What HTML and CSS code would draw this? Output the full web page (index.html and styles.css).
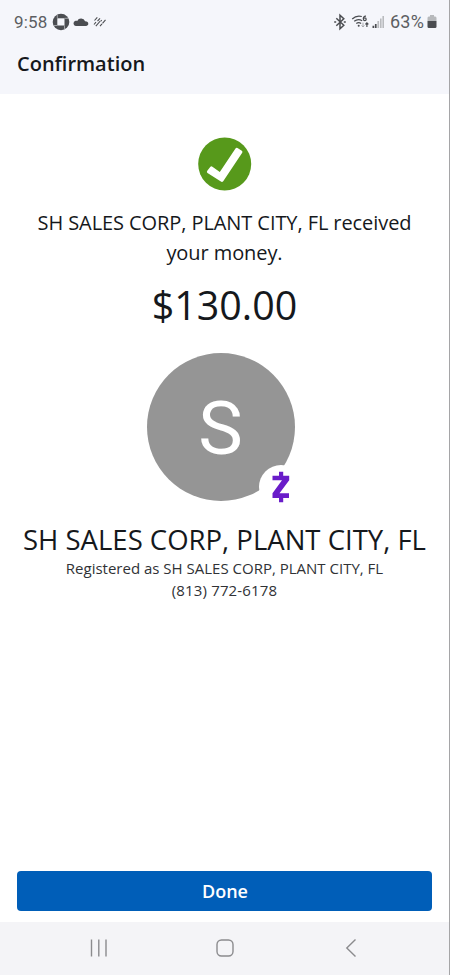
FILE: index.html
```html
<!DOCTYPE html>
<html lang="en">
<head>
<meta charset="utf-8">
<title>Confirmation</title>
<link rel="stylesheet" href="styles.css">
</head>
<body>
<div class="screen">
  <header class="top">
    <div class="status">
      <span class="time">9:58</span>
      <svg class="left-icons" width="56" height="18" viewBox="0 0 56 18">
        <circle cx="9" cy="9" r="8.3" fill="#4b4d51"/>
        <path d="M5.300 5.300h7.200v7.200H5.300z" fill="#f5f6fb"/>
        <path d="M5.300 5.300V1.400M12.500 5.300h4.200M12.500 12.500v4.200M5.300 12.500H1.400" stroke="#b5b7bb" stroke-width=".8"/>
        <path d="M23.700 12.900a2.600 2.600 0 0 1-.2-5.100c.8-.2 1.300-.1 1.700.1a4.300 4.300 0 0 1 7.900.4c2.300 0 3.200 1.300 3.200 2.500 0 1.300-1 2.100-2.300 2.100z" fill="#4b4d51"/>
        <path d="M42.500 7.500l2.800-3.200M42 11.500l2-2.300M45.500 8.200l2.500-2.900M43.800 13.200l4.500-5.200M48 13.200l2-2.300M50.500 10.300l3-3.500M48.800 8.200l.9-1" fill="none" stroke="#4b4d51" stroke-width="1.100"/>
      </svg>
      <svg class="right-icons" width="54" height="18" viewBox="0 0 54 18">
        <path d="M2.300 5.300l7.500 7-3.800 3.400V2.300L9.800 5.700l-7.500 7" fill="none" stroke="#4b4d51" stroke-width="1.500"/>
        <path d="M.2 9h2M9.800 9h2" stroke="#4b4d51" stroke-width="1.700"/>
        <g fill="none" stroke="#4b4d51" stroke-width="1.200">
          <path d="M18.200 6a10 10 0 0 1 9.600-2.500M20.200 8.300a7 7 0 0 1 8-.5M22.300 10.600a4 4 0 0 1 4.800 0"/>
          <path d="M32 3.200c-2-.2-2.700 1.200-2.700 2.800M32.900 14V9.800M31.400 11.300l1.500-1.500 1.500 1.500"/>
          <circle cx="30.800" cy="6.300" r="1.400"/>
        </g>
        <circle cx="24.700" cy="12.700" r="1" fill="#4b4d51"/>
        <path d="M29 9.600v4.400M27.600 12.400l1.400 1.600 1.400-1.600" fill="none" stroke="#a7a9ad"/>
        <path d="M38.500 12.800h1.700V15h-1.700z M40.900 11h1.700v4h-1.700z" fill="#4b4d51"/>
        <path d="M43.400 8h1.700v7h-1.700z M46 5.500h1.600V15H46z M48.400 3H50v12h-1.600z" fill="#b9bbbe"/>
      </svg>
      <span class="percent">63%</span>
      <svg class="battery" width="10" height="14" viewBox="0 0 10 14">
        <path d="M3 0h4v1.500h1.200Q9.500 1.500 9.500 3v3H.5V3Q.5 1.500 1.800 1.500H3z" fill="#b7b9bc"/>
        <path d="M.5 6h9v5.700q0 1.400-1.400 1.400H1.900Q.5 13.100.5 11.700z" fill="#4b4d51"/>
      </svg>
    </div>
    <h1 class="title">Confirmation</h1>
  </header>
  <main class="content">
    <svg class="check" width="54" height="54" viewBox="0 0 54 54">
      <circle cx="26.700" cy="27" r="26.500" fill="#57991b"/>
      <path d="M9.300 33.800l2.900-3.800q1-1.200 2.200-.3l7.400 5.200L37.500 11.500q.8-1.300 2-.5l4.300 2.700q1.200.8.400 2L25.200 44.200q-1 1.400-2.300.4L9.500 35.900q-1.200-.9-.2-2.100z" fill="#fff"/>
    </svg>
    <p class="message">SH SALES CORP, PLANT CITY, FL received<br>your money.</p>
    <p class="amount">$130.00</p>
    <div class="avatar">
      <span class="initial">S</span>
      <div class="badge">
        <svg width="18" height="32" viewBox="0 0 18 32">
          <path d="M.5 4.700h16.700v4.600L7.500 22.300h9.500v4.600H.5v-4.600L10 9.300H.5z M7 .7h4.200v5H7z M7 26h4.200v5.200H7z" fill="#691cc9"/>
        </svg>
      </div>
    </div>
    <h2 class="name">SH SALES CORP, PLANT CITY, FL</h2>
    <p class="detail">Registered as SH SALES CORP, PLANT CITY, FL</p>
    <p class="detail phone">(813) 772-6178</p>
    <button class="done">Done</button>
  </main>
  <nav class="nav">
    <svg width="18" height="18" viewBox="0 0 18 18"><path d="M2.500.5v17M9.800.5v17M17 .5v17"/></svg>
    <svg width="18" height="18" viewBox="0 0 18 18"><rect x="1" y="1" width="16" height="16" rx="4.500"/></svg>
    <svg width="18" height="18" viewBox="0 0 18 18"><path d="M13.500.5L4.800 9l8.700 8.500"/></svg>
  </nav>
</div>
</body>
</html>
```
FILE: styles.css
```css
* { box-sizing: border-box; }
body { margin: 0; background: #fff; font-family: "Open Sans", sans-serif; color: #15181c; }
h1, h2, p { margin: 0; font-weight: 400; white-space: nowrap; }
svg { display: block; flex: none; }
.screen { width: 450px; height: 975px; display: flex; flex-direction: column; border-right: 1px solid #a5a5a7; overflow: hidden; }
.top { height: 94px; flex: none; background: #f5f6fb; }
.status { height: 43px; display: flex; align-items: center; padding: 0 12px 0 14px; font-family: Roboto, sans-serif; font-size: 17px; color: #5c5e62; }
.time { width: 34px; letter-spacing: .2px; }
.left-icons { margin-left: 4px; }
.right-icons { margin-left: auto; }
.percent { width: 36px; margin-left: 2px; margin-right: 1px; font-size: 18px; letter-spacing: .2px; }
.title { padding-left: 17px; font-size: 20px; line-height: 41px; font-weight: 600; }
.content { flex: 1; display: flex; flex-direction: column; align-items: center; padding-top: 43px; }
.message { margin-top: 17px; font-size: 20px; line-height: 30px; letter-spacing: -.08px; text-align: center; }
.amount { margin-top: 9px; font-size: 39.4px; line-height: 56px; }
.avatar { position: relative; width: 148px; height: 148px; margin: 20px 8px 0 0; border-radius: 50%; background: #959595; display: flex; align-items: center; justify-content: center; flex: none; }
.initial { padding-top: 2px; font-family: Roboto, sans-serif; font-size: 75px; line-height: 76px; color: #fff; }
.badge { position: absolute; left: 112px; top: 112px; width: 44px; height: 44px; border-radius: 50%; background: #fff; display: flex; align-items: center; justify-content: center; }
.name { margin: 21px 0 -1px; font-size: 27.5px; line-height: 36px; }
.detail { font-size: 15px; line-height: 22px; color: #303236; }
.phone { letter-spacing: .15px; }
.done { width: 415px; height: 40px; margin: auto 0 11px; padding: 0 0 0 1px; border: 0; border-radius: 4px; background: #005eb8; color: #fff; font: 600 18px/40px "Open Sans", sans-serif; }
.nav { height: 53px; flex: none; display: flex; justify-content: space-between; align-items: center; padding: 0 89px 2px; background: #f4f4f7; }
.nav svg { fill: none; stroke: #8b8b8e; stroke-width: 1.4; }
```
